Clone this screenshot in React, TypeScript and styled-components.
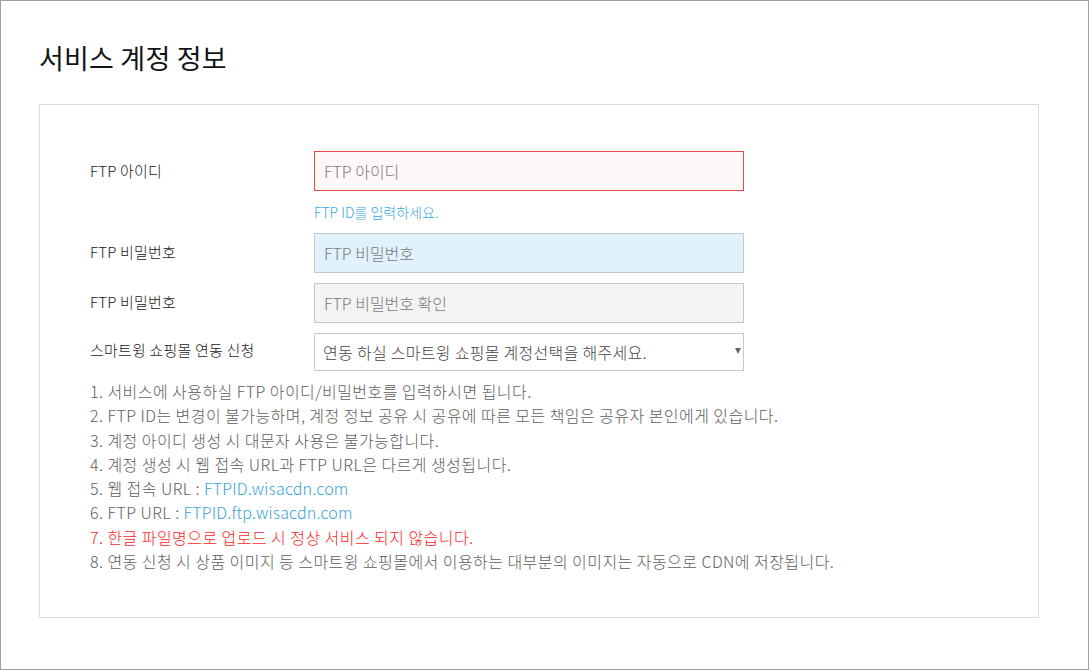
import styled, { createGlobalStyle } from "styled-components";

const GlobalStyle = createGlobalStyle`
  html, body {
    margin: 0;
    padding: 0;
    background: #ffffff;
  }
  body {
    font-family: "Noto Sans CJK KR", "Noto Sans", sans-serif;
    font-weight: 300;
  }
  * {
    box-sizing: border-box;
  }
`;

const Frame = styled.div`
  width: 1089px;
  height: 670px;
  border: 1px solid #a0a0a0;
  padding: 39px 49px 0 38px;
`;

const Title = styled.h1`
  margin: 0 0 28px;
  font-size: 27px;
  line-height: 36px;
  font-weight: 400;
  color: #111417;
  letter-spacing: 0.2px;
`;

const Card = styled.div`
  border: 1px solid #dcdcdc;
  padding: 46px 50px 44px 50px;
  height: 514px;
`;

const Row = styled.div<{ $gap?: number }>`
  display: flex;
  align-items: flex-start;
  margin-bottom: ${(p) => p.$gap ?? 10}px;
`;

const Label = styled.label<{ $h?: number }>`
  width: 224px;
  flex: none;
  font-size: 15px;
  letter-spacing: 0.2px;
  color: #1a1a1a;
  line-height: ${(p) => p.$h ?? 38}px;
`;

const Control = styled.div`
  width: 430px;
  position: relative;
`;

const Input = styled.input<{ $tone?: "error" | "focus" | "disabled" }>`
  display: block;
  width: 430px;
  height: 40px;
  padding: 0 9px;
  font-family: inherit;
  font-weight: 300;
  font-size: 16px;
  color: #555;
  outline: none;
  border: 1px solid
    ${(p) => (p.$tone === "error" ? "#e94b4b" : "#c8c8c8")};
  background: ${(p) =>
    p.$tone === "error"
      ? "#fff8f8"
      : p.$tone === "focus"
      ? "#e1f2fc"
      : p.$tone === "disabled"
      ? "#f3f3f3"
      : "#fff"};
  &::placeholder {
    color: #7a7a7a;
  }
`;

const Helper = styled.div`
  margin-top: 11px;
  font-size: 14px;
  line-height: 20px;
  color: #3aa9e0;
`;

const Select = styled.select`
  display: block;
  width: 430px;
  height: 38px;
  padding: 0 24px 0 8px;
  font-family: inherit;
  font-weight: 300;
  font-size: 16px;
  letter-spacing: 0.3px;
  color: #444;
  border: 1px solid #c8c8c8;
  background: #fff;
  appearance: none;
  outline: none;
`;

const Arrow = styled.span`
  position: absolute;
  right: 3px;
  top: 15px;
  width: 0;
  height: 0;
  border-left: 3px solid transparent;
  border-right: 3px solid transparent;
  border-top: 6px solid #666;
  pointer-events: none;
`;

const Notes = styled.ol`
  list-style: none;
  margin: 8px 0 0;
  padding: 0;
`;

const Note = styled.li<{ $warn?: boolean }>`
  font-size: 16px;
  line-height: 24.3px;
  color: ${(p) => (p.$warn ? "#ff1d1d" : "#5e5e5e")};
  letter-spacing: 0.45px;
`;

const Link = styled.a`
  color: #3a9fd9;
  text-decoration: none;
  letter-spacing: 0.2px;
`;

export default function App() {
  return (
    <>
      <GlobalStyle />
      <Frame>
        <Title>서비스 계정 정보</Title>
        <Card>
          <Row $gap={11}>
            <Label $h={40}>FTP 아이디</Label>
            <Control>
              <Input $tone="error" placeholder="FTP 아이디" />
              <Helper>FTP ID를 입력하세요.</Helper>
            </Control>
          </Row>
          <Row>
            <Label>FTP 비밀번호</Label>
            <Control>
              <Input $tone="focus" type="password" placeholder="FTP 비밀번호" />
            </Control>
          </Row>
          <Row>
            <Label>FTP 비밀번호</Label>
            <Control>
              <Input $tone="disabled" type="password" placeholder="FTP 비밀번호 확인" />
            </Control>
          </Row>
          <Row $gap={0}>
            <Label $h={34}>스마트윙 쇼핑몰 연동 신청</Label>
            <Control>
              <Select defaultValue="">
                <option value="">연동 하실 스마트윙 쇼핑몰 계정선택을 해주세요.</option>
              </Select>
              <Arrow />
            </Control>
          </Row>
          <Notes>
            <Note>1. 서비스에 사용하실 FTP 아이디/비밀번호를 입력하시면 됩니다.</Note>
            <Note>2. FTP ID는 변경이 불가능하며, 계정 정보 공유 시 공유에 따른 모든 책임은 공유자 본인에게 있습니다.</Note>
            <Note>3. 계정 아이디 생성 시 대문자 사용은 불가능합니다.</Note>
            <Note>4. 계정 생성 시 웹 접속 URL과 FTP URL은 다르게 생성됩니다.</Note>
            <Note>
              5. 웹 접속 URL : <Link>FTPID.wisacdn.com</Link>
            </Note>
            <Note>
              6. FTP URL : <Link>FTPID.ftp.wisacdn.com</Link>
            </Note>
            <Note $warn>7. 한글 파일명으로 업로드 시 정상 서비스 되지 않습니다.</Note>
            <Note>8. 연동 신청 시 상품 이미지 등 스마트윙 쇼핑몰에서 이용하는 대부분의 이미지는 자동으로 CDN에 저장됩니다.</Note>
          </Notes>
        </Card>
      </Frame>
    </>
  );
}
